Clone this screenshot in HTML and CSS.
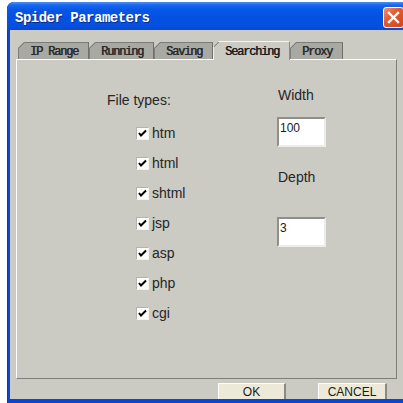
FILE: index.html
```html
<!DOCTYPE html>
<html lang="en">
<head>
<meta charset="utf-8">
<title>Spider Parameters</title>
<link rel="stylesheet" href="styles.css">
</head>
<body>
<div class="window">
  <div class="titlebar">
    <span class="title">Spider Parameters</span>
    <span class="close-btn">
      <svg width="13" height="13" viewBox="0 0 13 13"><path d="M2 2 L11 11 M11 2 L2 11" stroke="#fff" stroke-width="2.4" stroke-linecap="square"/></svg>
    </span>
  </div>
  <div class="client">
    <div class="tabs">
      <span class="tab">IP Range</span>
      <span class="tab">Running</span>
      <span class="tab">Saving</span>
      <span class="tab tab-active">Searching</span>
      <span class="tab">Proxy</span>
    </div>
    <div class="panel">
      <div class="col-types">
        <div class="label">File types:</div>
        <ul class="checks">
          <li class="check-row"><span class="box"><svg width="11" height="11" viewBox="0 0 11 11"><path d="M2 5 L4 7.5 L9 2.5" fill="none" stroke="#000" stroke-width="2"/></svg></span>htm</li>
          <li class="check-row"><span class="box"><svg width="11" height="11" viewBox="0 0 11 11"><path d="M2 5 L4 7.5 L9 2.5" fill="none" stroke="#000" stroke-width="2"/></svg></span>html</li>
          <li class="check-row"><span class="box"><svg width="11" height="11" viewBox="0 0 11 11"><path d="M2 5 L4 7.5 L9 2.5" fill="none" stroke="#000" stroke-width="2"/></svg></span>shtml</li>
          <li class="check-row"><span class="box"><svg width="11" height="11" viewBox="0 0 11 11"><path d="M2 5 L4 7.5 L9 2.5" fill="none" stroke="#000" stroke-width="2"/></svg></span>jsp</li>
          <li class="check-row"><span class="box"><svg width="11" height="11" viewBox="0 0 11 11"><path d="M2 5 L4 7.5 L9 2.5" fill="none" stroke="#000" stroke-width="2"/></svg></span>asp</li>
          <li class="check-row"><span class="box"><svg width="11" height="11" viewBox="0 0 11 11"><path d="M2 5 L4 7.5 L9 2.5" fill="none" stroke="#000" stroke-width="2"/></svg></span>php</li>
          <li class="check-row"><span class="box"><svg width="11" height="11" viewBox="0 0 11 11"><path d="M2 5 L4 7.5 L9 2.5" fill="none" stroke="#000" stroke-width="2"/></svg></span>cgi</li>
        </ul>
      </div>
      <div class="col-limits">
        <div class="label label-width">Width</div>
        <div class="field">100</div>
        <div class="label label-depth">Depth</div>
        <div class="field field-depth">3</div>
      </div>
    </div>
    <div class="buttons">
      <span class="btn btn-ok">OK</span>
      <span class="btn btn-cancel">CANCEL</span>
    </div>
  </div>
</div>
</body>
</html>
```
FILE: styles.css
```css
html, body {
  margin: 0;
  padding: 0;
  overflow: hidden;
  background: #fff;
}

body {
  width: 403px;
  height: 403px;
}

/* XP-style window frame */
.window {
  margin: 2px 0 0 7px;
  width: 403px;
  height: 401px;
  display: flex;
  flex-direction: column;
  background: #0846d6;
  border-radius: 7px 7px 0 0;
  overflow: hidden;
  box-shadow: inset 1px 0 0 #0a3bb0;
}

.titlebar {
  height: 28px;
  flex: none;
  display: flex;
  align-items: flex-start;
  padding: 8px 0 0 8px;
  box-sizing: border-box;
  background: linear-gradient(#4a93f8 0, #1a67ee 3px, #0757e6 8px, #0452e2 50%, #0550e0 85%, #0a48d0 100%);
}

.title {
  font-family: "Liberation Mono", monospace;
  font-weight: bold;
  font-size: 14px;
  line-height: 16px;
  letter-spacing: -0.5px;
  color: #fff;
  text-shadow: 1px 1px 0 #0a2a8a;
}

.close-btn {
  margin: -3px 6px 0 auto;
  width: 21px;
  height: 21px;
  box-sizing: border-box;
  border: 1px solid #fff;
  border-radius: 3px;
  background: linear-gradient(135deg, #f09070 0, #e35a32 40%, #d0451e 100%);
  display: flex;
  align-items: center;
  justify-content: center;
}

.client {
  flex: 1;
  margin: 0 0 4px 3px;
  background: #cbcac3;
  padding: 11px 0 0 6px;
  overflow: hidden;
}

/* tab strip */
.tabs {
  display: flex;
  align-items: flex-end;
  height: 18px;
  margin-left: 2px;
}

.tab {
  height: 17px;
  box-sizing: border-box;
  padding: 3px 10px 0 11px;
  border-top: 1px solid #7c7c78;
  border-right: 1px solid #6e6e6a;
  border-left: 1px solid #7c7c78;
  clip-path: polygon(6px 0, 100% 0, 100% 100%, 0 100%, 0 6px);
  background: linear-gradient(135deg, transparent 4.2px, #7c7c78 4.2px, #7c7c78 5.2px, #a9a9a3 5.2px);
  background-origin: border-box;
  font-family: "Liberation Mono", monospace;
  font-weight: normal;
  font-size: 12px;
  line-height: 13px;
  letter-spacing: -1.2px;
  color: #2a2a2a;
  text-shadow: 0.4px 0 0 #2a2a2a;
  white-space: nowrap;
}

.tab-active {
  height: 19px;
  margin-bottom: -1px;
  position: relative;
  z-index: 1;
  padding-top: 4px;
  border-top-color: #f4f4f0;
  border-left-color: #f4f4f0;
  border-right-color: #8a8a86;
  background: linear-gradient(135deg, transparent 4.2px, #8a8a86 4.2px, #8a8a86 5.2px, #cbcac3 5.2px);
  background-origin: border-box;
  color: #1a1a1a;
}

/* page body of the active tab */
.panel {
  width: 381px;
  height: 320px;
  box-sizing: border-box;
  border-top: 1px solid #fff;
  border-left: 1px solid #fff;
  border-right: 1px solid #7e7e7a;
  border-bottom: 1px solid #7e7e7a;
  display: flex;
  padding-left: 90px;
  font-family: "Liberation Sans", Arial, sans-serif;
  color: #262626;
}

.label {
  font-size: 14px;
  line-height: 17px;
}

.col-types {
  width: 170px;
  padding-top: 32px;
}

.checks {
  list-style: none;
  margin: 18px 0 0;
  padding: 0 0 0 29px;
}

.check-row {
  display: flex;
  align-items: center;
  height: 13px;
  margin-bottom: 17px;
  font-size: 14px;
  line-height: 13px;
}

.box {
  width: 13px;
  height: 13px;
  flex: none;
  box-sizing: border-box;
  margin-right: 3px;
  border-top: 1px solid #b4b4ae;
  border-left: 1px solid #b4b4ae;
  border-right: 1px solid #f2f2ee;
  border-bottom: 1px solid #f2f2ee;
  background: #fcfcf8;
  display: flex;
  align-items: center;
  justify-content: center;
}

.col-limits {
  padding-top: 27px;
}

.label-width {
  padding-left: 1px;
}

.label-depth {
  padding-left: 1px;
  margin-top: 22px;
}

.field {
  width: 49px;
  height: 30px;
  box-sizing: border-box;
  margin-top: 13px;
  padding: 2px 0 0 1px;
  border-top: 2px solid #8f8f8a;
  border-left: 2px solid #8f8f8a;
  border-right: 2px solid #ececE8;
  border-bottom: 2px solid #ececE8;
  background: #fff;
  font-size: 12px;
  line-height: 14px;
  color: #1a1a1a;
}

.field-depth {
  margin-top: 31px;
}

/* dialog buttons */
.buttons {
  display: flex;
  gap: 32px;
  padding: 4px 0 0 202px;
}

.btn {
  height: 16px;
  box-sizing: border-box;
  padding-top: 2px;
  border-top: 1px solid #fff;
  border-left: 1px solid #fff;
  border-right: 2px solid #8a8a84;
  background: #ece9d8;
  font-family: "Liberation Sans", Arial, sans-serif;
  font-size: 12px;
  line-height: 13px;
  color: #1a1a1a;
  text-align: center;
}

.btn-ok {
  width: 68px;
}

.btn-cancel {
  width: 69px;
}
```
